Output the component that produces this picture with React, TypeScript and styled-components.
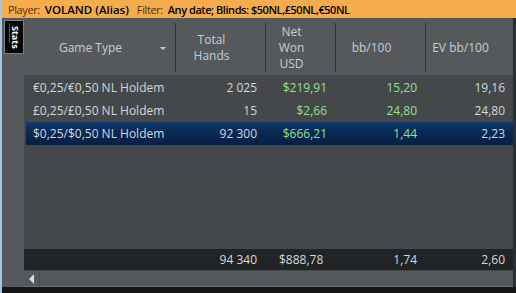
import React from "react";
import styled, { createGlobalStyle } from "styled-components";

const GlobalStyle = createGlobalStyle`
  html, body { margin: 0; padding: 0; background: #131516; }
  body { font-family: "Open Sans", "Noto Sans", sans-serif; }
`;

const COLS = "149px 90px 70px 90px 88px";

const Window = styled.div`
  width: 516px;
  height: 293px;
  display: flex;
  flex-direction: column;
  background: #131516;
  border-left: 2px solid #a9c2e2;
  box-sizing: border-box;
  overflow: hidden;
`;

const TopBar = styled.div`
  height: 18px;
  flex-shrink: 0;
  background: #f4ac4c;
  display: flex;
  align-items: center;
  padding-left: 6px;
  font-size: 11px;
  white-space: nowrap;
`;

const Label = styled.span`
  color: #5a2f05;
  letter-spacing: -0.4px;
  margin-right: 5px;
`;

const Value = styled.span<{ $size?: number; $tight?: boolean }>`
  color: #000;
  font-weight: 600;
  font-size: ${({ $size }) => $size || 11}px;
  letter-spacing: ${({ $tight }) => ($tight ? "-0.45px" : "0")};
  margin-right: 8px;
`;

const Body = styled.div`
  display: flex;
  height: 269px;
  flex-shrink: 0;
`;

const SideStrip = styled.div`
  width: 22px;
  flex-shrink: 0;
  background: #56595c;
  padding-top: 1px;
`;

const StatsTab = styled.div`
  margin: 1px 0 0 2px;
  width: 12px;
  height: 32px;
  padding-left: 6px;
  border: 1px solid #7d8083;
  background: #050505;
  position: relative;
  display: flex;
  align-items: center;
  &::before {
    content: "";
    position: absolute;
    left: 4px;
    top: 2px;
    width: 1px;
    height: 20px;
    background: #b3262b;
  }
`;

const StatsText = styled.span`
  writing-mode: vertical-rl;
  color: #fff;
  font-size: 9px;
  line-height: 9px;
  font-weight: 700;
  font-family: "Open Sans", sans-serif;
`;

const Main = styled.div`
  flex: 1;
  display: flex;
  flex-direction: column;
  border-right: 3px solid #2c2f31;
`;

const Header = styled.div`
  height: 57px;
  flex-shrink: 0;
  background: #55595c;
  display: grid;
  grid-template-columns: 151px 90px 70px 90px 88px;
  padding: 5px 0 3px;
  box-sizing: border-box;
`;

const HeadCell = styled.div<{ $first?: boolean }>`
  position: relative;
  display: flex;
  align-items: center;
  justify-content: center;
  padding-right: 18px;
  text-align: center;
  color: #c9cdd1;
  font-size: 12px;
  line-height: 16px;
  border-left: ${({ $first }) => ($first ? "none" : "1px solid #2f3234")};
`;

const SortArrow = styled.span`
  position: absolute;
  right: 9px;
  top: 24px;
  width: 0;
  height: 0;
  border-left: 3px solid transparent;
  border-right: 3px solid transparent;
  border-top: 3px solid #c9cdd1;
`;

const Rows = styled.div`
  flex: 1;
  background: #45484a;
  padding: 1px 0 0 2px;
`;

const Row = styled.div<{ $selected?: boolean }>`
  display: grid;
  grid-template-columns: ${COLS};
  height: 23px;
  align-items: center;
  font-size: 12px;
  background: ${({ $selected }) =>
    $selected ? "linear-gradient(#0f3a6e, #0a2a55 40%, #071f44)" : "transparent"};
`;

const Cell = styled.div<{ $green?: boolean; $left?: boolean }>`
  color: ${({ $green }) => ($green ? "#8fe18f" : "#d4d7db")};
  text-align: ${({ $left }) => ($left ? "left" : "right")};
  padding: ${({ $left }) => ($left ? "0 0 0 7px" : "0 8px 0 0")};
  white-space: nowrap;
`;

const Footer = styled.div`
  height: 21px;
  flex-shrink: 0;
  background: #212426;
  display: grid;
  grid-template-columns: 151px 90px 70px 90px 88px;
  align-items: center;
  font-size: 12px;
`;

const FootCell = styled.div<{ $align?: "left" | "right" }>`
  color: #d4d7db;
  text-align: ${({ $align }) => $align || "right"};
  padding: ${({ $align }) => ($align === "left" ? "0 0 0 14px" : "0 8px 0 0")};
`;

const ScrollBar = styled.div`
  height: 17px;
  flex-shrink: 0;
  background: #55585b;
  display: flex;
  border-top: 1px solid #45484a;
  border-bottom: 1px solid #6a6d70;
  box-sizing: border-box;
`;

const ScrollButton = styled.div`
  width: 15px;
  border-right: 1px solid #45484a;
  display: flex;
  align-items: center;
  justify-content: center;
  &::after {
    content: "";
    width: 0;
    height: 0;
    border-top: 5px solid transparent;
    border-bottom: 5px solid transparent;
    border-right: 5px solid #d8dadc;
  }
`;

const rows = [
  { game: "€0,25/€0,50 NL Holdem", hands: "2 025", won: "$219,91", bb: "15,20", ev: "19,16" },
  { game: "£0,25/£0,50 NL Holdem", hands: "15", won: "$2,66", bb: "24,80", ev: "24,80" },
  { game: "$0,25/$0,50 NL Holdem", hands: "92 300", won: "$666,21", bb: "1,44", ev: "2,23", selected: true },
];

export default function App() {
  return (
    <>
      <GlobalStyle />
      <Window>
        <TopBar>
          <Label>Player:</Label>
          <Value $size={11.5}>VOLAND (Alias)</Value>
          <Label>Filter:</Label>
          <Value $tight>Any date; Blinds: $50NL,£50NL,€50NL</Value>
        </TopBar>
        <Body>
          <SideStrip>
            <StatsTab>
              <StatsText>Stats</StatsText>
            </StatsTab>
          </SideStrip>
          <Main>
            <Header>
              <HeadCell $first>
                Game Type
                <SortArrow />
              </HeadCell>
              <HeadCell>
                Total
                <br />
                Hands
              </HeadCell>
              <HeadCell>
                Net
                <br />
                Won
                <br />
                USD
              </HeadCell>
              <HeadCell>bb/100</HeadCell>
              <HeadCell>EV bb/100</HeadCell>
            </Header>
            <Rows>
              {rows.map((r) => (
                <Row key={r.game} $selected={r.selected}>
                  <Cell $left>{r.game}</Cell>
                  <Cell>{r.hands}</Cell>
                  <Cell $green>{r.won}</Cell>
                  <Cell $green>{r.bb}</Cell>
                  <Cell>{r.ev}</Cell>
                </Row>
              ))}
            </Rows>
            <Footer>
              <FootCell />
              <FootCell>94 340</FootCell>
              <FootCell $align="left">$888,78</FootCell>
              <FootCell>1,74</FootCell>
              <FootCell>2,60</FootCell>
            </Footer>
            <ScrollBar>
              <ScrollButton />
            </ScrollBar>
          </Main>
        </Body>
      </Window>
    </>
  );
}
